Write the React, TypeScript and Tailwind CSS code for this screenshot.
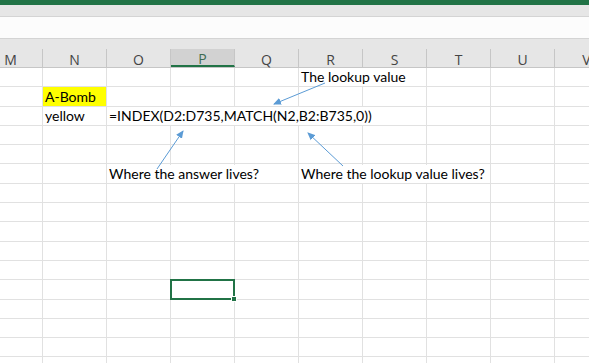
import React from "react";

const columns = ["M", "N", "O", "P", "Q", "R", "S", "T", "U", "V"];

// cell text keyed by "row-col"
const cells: Record<string, { text: string; yellow?: boolean }> = {
  "1-R": { text: "The lookup value" },
  "2-N": { text: "A-Bomb", yellow: true },
  "3-N": { text: "yellow" },
  "3-O": { text: "=INDEX(D2:D735,MATCH(N2,B2:B735,0))" },
  "6-O": { text: "Where the answer lives?" },
  "6-R": { text: "Where the lookup value lives?" },
};

const rows = Array.from({ length: 16 }, (_, i) => i + 1);

const Arrows = () => (
  <svg
    className="absolute left-0 top-0 pointer-events-none z-20"
    width="589"
    height="363"
    viewBox="0 0 589 363"
  >
    <defs>
      <marker id="head" markerWidth="8" markerHeight="8" refX="7" refY="4" orient="auto" markerUnits="userSpaceOnUse">
        <path d="M0,0.5 L8,4 L0,7.5 Z" fill="#5b9bd5" />
      </marker>
    </defs>
    <line x1="325" y1="83" x2="274" y2="104" stroke="#5b9bd5" strokeWidth="1" markerEnd="url(#head)" />
    <line x1="157" y1="169" x2="183" y2="131" stroke="#5b9bd5" strokeWidth="1" markerEnd="url(#head)" />
    <line x1="343" y1="166" x2="308" y2="133" stroke="#5b9bd5" strokeWidth="1" markerEnd="url(#head)" />
  </svg>
);

export default function App() {
  return (
    <div className="relative w-[589px] h-[363px] overflow-hidden bg-white">
      <div className="h-[5px] bg-[#217346]" />
      <div className="h-[12px] bg-[#e6e6e6] border-b border-[#d4d4d4]" />
      <div className="h-[22px] bg-[#fcfcfc] border-b border-[#d4d4d4]" />
      <div className="bg-[#e6e6e6] pt-[10px]">
        <div className="flex -ml-[21px] h-[19px] border-b border-[#c6c6c6]">
          {columns.map((c) => (
            <div
              key={c}
              className={
                c === "P"
                  ? "w-16 shrink-0 flex items-center justify-center pt-[2px] bg-[#d2d2d2] border-r border-[#c6c6c6] border-b-2 border-b-[#217346] text-[14px] text-[#3d6b52] font-['Open_Sans',sans-serif]"
                  : "w-16 shrink-0 flex items-center justify-center pt-[2px] border-r border-[#c6c6c6] text-[14px] text-[#444] font-['Open_Sans',sans-serif]"
              }
            >
              {c}
            </div>
          ))}
        </div>
      </div>
      <div className="-ml-[21px]">
        {rows.map((r) => (
          <div key={r} className="flex h-[19.3px]">
            {columns.map((c) => {
              const cell = cells[`${r}-${c}`];
              const selected = r === 12 && c === "P";
              return (
                <div
                  key={c}
                  className={
                    (cell?.yellow ? "bg-[#ffff00] " : "") +
                    "relative w-16 shrink-0 border-r border-b border-[#e1e1e1] flex items-end overflow-visible"
                  }
                >
                  {cell && (
                    <span
                      className={
                        (cell.yellow ? "" : "bg-white ") +
                        "relative z-10 whitespace-nowrap pl-[2px] pr-[2px] leading-[18px] text-[14px] text-black font-['Lato',sans-serif]"
                      }
                    >
                      {cell.text}
                    </span>
                  )}
                  {selected && (
                    <div className="absolute -left-[1px] -top-[1px] w-[65px] h-[20.3px] border-2 border-[#217346] z-10">
                      <div className="absolute -right-[4px] -bottom-[4px] w-[6px] h-[6px] bg-[#217346] border border-white" />
                    </div>
                  )}
                </div>
              );
            })}
          </div>
        ))}
      </div>
      <Arrows />
    </div>
  );
}
